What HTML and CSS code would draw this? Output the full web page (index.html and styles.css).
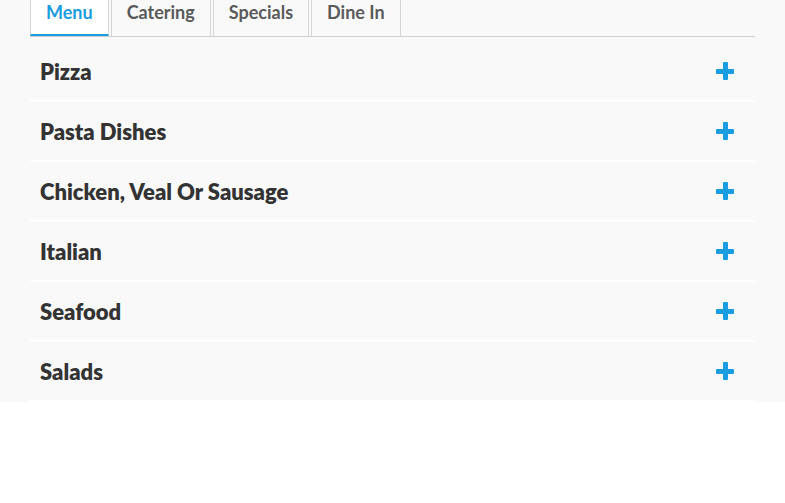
FILE: index.html
```html
<!DOCTYPE html>
<html>
<head>
<meta charset="utf-8">
<link rel="stylesheet" href="styles.css">
</head>
<body>
<div class="page">
  <ul class="tabs">
    <li class="tab active">Menu</li>
    <li class="tab">Catering</li>
    <li class="tab">Specials</li>
    <li class="tab">Dine In</li>
  </ul>
  <div class="accordion">
    <div class="item"><span class="title">Pizza</span><span class="plus"></span></div>
    <div class="item"><span class="title">Pasta Dishes</span><span class="plus"></span></div>
    <div class="item"><span class="title">Chicken, Veal Or Sausage</span><span class="plus"></span></div>
    <div class="item"><span class="title">Italian</span><span class="plus"></span></div>
    <div class="item"><span class="title">Seafood</span><span class="plus"></span></div>
    <div class="item"><span class="title">Salads</span><span class="plus"></span></div>
  </div>
</div>
</body>
</html>
```
FILE: styles.css
```css
* { box-sizing: border-box; }
html, body { margin: 0; padding: 0; background: #fff; }
body { font-family: "Lato", "Open Sans", sans-serif; }
.page {
  background: #f9f9f9;
  padding: 0 30px;
  height: 402px;
}
.tabs {
  list-style: none;
  margin: 0;
  padding: 0;
  display: flex;
  gap: 2px;
  height: 37px;
  border-bottom: 1px solid #cfcfcf;
}
.tab {
  height: 36px;
  padding: 0 15px;
  line-height: 24px;
  font-size: 18px;
  font-weight: 700;
  color: #5a5a5a;
  border-left: 1px solid #d6d6d6;
  border-right: 1px solid #d6d6d6;
}
.tab.active {
  color: #1a9ce0;
  background: #fff;
  border-bottom: 2px solid #1a9ce0;
}
.accordion { margin-top: 5px; }
.item {
  height: 60px;
  border-bottom: 2px solid #fff;
  display: flex;
  align-items: center;
  justify-content: space-between;
  padding: 0 21px 0 10px;
}
.title {
  font-size: 22px;
  font-weight: 800;
  color: #333;
}
.plus {
  position: relative;
  width: 18px;
  height: 18px;
}
.plus::before, .plus::after {
  content: "";
  position: absolute;
  background: #1a9ce0;
  border-radius: 1px;
}
.plus::before { left: 0; right: 0; top: 6.5px; height: 5px; }
.plus::after { top: 0; bottom: 0; left: 6.5px; width: 5px; }
```
